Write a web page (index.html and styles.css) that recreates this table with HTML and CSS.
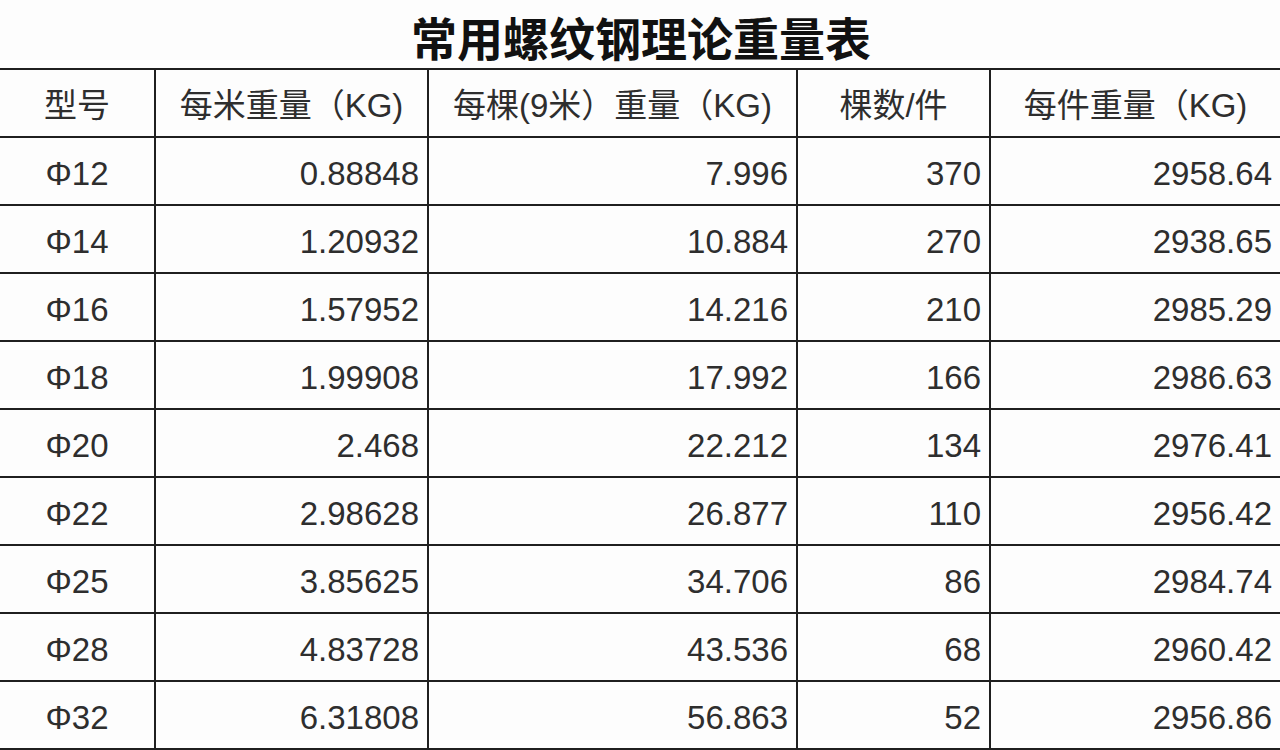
FILE: index.html
```html
<!DOCTYPE html>
<html lang="zh">
<head>
<meta charset="utf-8">
<title>常用螺纹钢理论重量表</title>
<link rel="stylesheet" href="styles.css">
</head>
<body>
<div class="page">
  <h1 class="title">常用螺纹钢理论重量表</h1>
  <table class="sheet">
    <colgroup>
      <col class="c1"><col class="c2"><col class="c3"><col class="c4"><col class="c5">
    </colgroup>
    <thead>
      <tr>
        <th>型号</th>
        <th>每米重量（KG)</th>
        <th>每棵(9米）重量（KG)</th>
        <th>棵数/件</th>
        <th>每件重量（KG)</th>
      </tr>
    </thead>
    <tbody>
      <tr><td class="spec">Φ12</td><td>0.88848</td><td>7.996</td><td>370</td><td>2958.64</td></tr>
      <tr><td class="spec">Φ14</td><td>1.20932</td><td>10.884</td><td>270</td><td>2938.65</td></tr>
      <tr><td class="spec">Φ16</td><td>1.57952</td><td>14.216</td><td>210</td><td>2985.29</td></tr>
      <tr><td class="spec">Φ18</td><td>1.99908</td><td>17.992</td><td>166</td><td>2986.63</td></tr>
      <tr><td class="spec">Φ20</td><td>2.468</td><td>22.212</td><td>134</td><td>2976.41</td></tr>
      <tr><td class="spec">Φ22</td><td>2.98628</td><td>26.877</td><td>110</td><td>2956.42</td></tr>
      <tr><td class="spec">Φ25</td><td>3.85625</td><td>34.706</td><td>86</td><td>2984.74</td></tr>
      <tr><td class="spec">Φ28</td><td>4.83728</td><td>43.536</td><td>68</td><td>2960.42</td></tr>
      <tr><td class="spec">Φ32</td><td>6.31808</td><td>56.863</td><td>52</td><td>2956.86</td></tr>
    </tbody>
  </table>
</div>
</body>
</html>
```
FILE: styles.css
```css
html, body {
  margin: 0;
  padding: 0;
  background: #fdfdfd;
}
body {
  width: 1280px;
  height: 750px;
  overflow: hidden;
  font-family: "Liberation Sans", "Noto Sans CJK SC", sans-serif;
  color: #2e2e2e;
}
.page {
  display: flex;
  flex-direction: column;
}
.title {
  margin: 0;
  height: 68px;
  line-height: 72px;
  text-align: center;
  font-family: "Noto Sans CJK SC", sans-serif;
  font-size: 46px;
  font-weight: 700;
  color: #111;
  padding-left: 2px;
}
.sheet {
  border-collapse: collapse;
  table-layout: fixed;
  width: 1280px;
}
.c1 { width: 155px; }
.c2 { width: 273px; }
.c3 { width: 369px; }
.c4 { width: 193px; }
.c5 { width: 290px; }
.sheet th,
.sheet td {
  box-sizing: border-box;
  height: 68px;
  padding: 0;
  border: 2px solid #1f1f1f;
  vertical-align: middle;
  font-weight: 400;
  white-space: nowrap;
  line-height: 1;
}
.sheet tr > :first-child { border-left: none; }
.sheet tr > :last-child { border-right: none; }
.sheet th {
  text-align: center;
  font-size: 33px;
  padding-top: 4px;
}
.sheet td {
  text-align: right;
  font-size: 33px;
  padding: 4px 8px 0 0;
}
.sheet td.spec {
  text-align: center;
  padding-right: 0;
}
```
